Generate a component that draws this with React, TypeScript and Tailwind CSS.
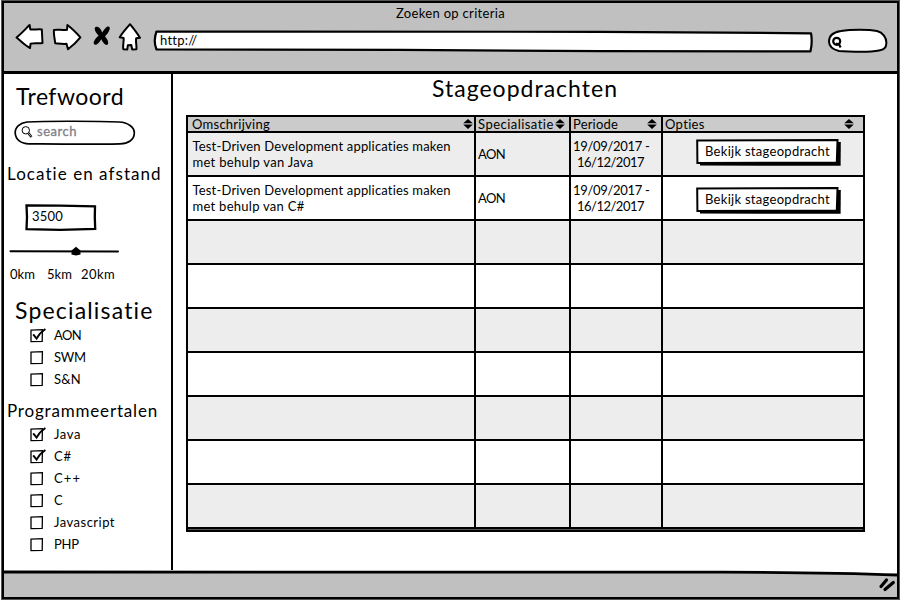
import { useLayoutEffect, useRef, useState, type ReactNode } from "react";

/* Single line of text whose tracking is fitted to the given width. */
function Label({ w, className = "", children }: { w: number; className?: string; children: string }) {
  const ref = useRef<HTMLSpanElement>(null);
  const [spacing, setSpacing] = useState(0);
  useLayoutEffect(() => {
    const el = ref.current;
    if (el) setSpacing((w - el.getBoundingClientRect().width) / children.length);
  }, []);
  return (
    <span ref={ref} style={{ letterSpacing: spacing }} className={`inline-block shrink-0 whitespace-pre ${className}`}>
      {children}
    </span>
  );
}

function Heading({ children, className = "" }: { children: ReactNode; className?: string }) {
  return <h2 className={`flex items-center font-normal ${className}`}>{children}</h2>;
}

function Check({ label, w, checked = false }: { label: string; w: number; checked?: boolean }) {
  return (
    <label className="flex h-[22px] items-center pl-[25px]">
      <svg width="20" height="18" viewBox="0 0 20 18" fill="none" stroke="#000" className="mr-[5px] shrink-0">
        <path d="M2 4.2 13.4 3.6 13.2 15.3 2 15.6Z" strokeWidth="1.3" />
        {checked && <path d="M4.2 8.3 7.6 12.6C9.8 8.6 12.3 5.6 16.4 3" strokeWidth="1.9" />}
      </svg>
      <Label w={w}>{label}</Label>
    </label>
  );
}

function SortIcon({ className = "" }: { className?: string }) {
  return (
    <svg width="10" height="10" viewBox="0 0 10 10" className={`mb-[1px] shrink-0 ${className}`}>
      <path d="M5 0 9.8 4.3H.2ZM.2 5.5H9.8L5 9.9Z" />
    </svg>
  );
}

function Button() {
  return (
    <button className="relative flex h-[27px] w-[146px] items-center pb-[2px] pl-[9px]">
      <svg width="146" height="27" viewBox="0 0 146 27" className="absolute inset-0">
        <path d="M4 3.2 144.800 3 144.600 26.800 4 26.500Z" />
        <path d="M1.2 1.4 141.500 1 140.800 23.600 1.400 24Z" fill="#fff" stroke="#000" strokeWidth="2" />
      </svg>
      <Label w={125} className="relative">Bekijk stageopdracht</Label>
    </button>
  );
}

const GRID = "grid grid-cols-[288px_95px_92px_200px]";
const CELL = "border-r-2 border-black";

const OPDRACHTEN = [
  { tail: "met behulp van Java", w: 121, pad: "pt-[6px]" },
  { tail: "met behulp van C#", w: 112, pad: "pt-[10px]" },
];

function Row({ index }: { index: number }) {
  const item = OPDRACHTEN[index];
  return (
    <div className={`${GRID} h-[44px] border-b-2 border-black ${index % 2 === 0 ? "bg-[#ededed]" : "bg-white"}`}>
      <div className={`${CELL} flex flex-col items-start pt-[5px] pl-[4.5px] leading-[16px]`}>
        {item && (
          <>
            <Label w={258.5}>Test-Driven Development applicaties maken</Label>
            <Label w={item.w}>{item.tail}</Label>
          </>
        )}
      </div>
      <div className={`${CELL} flex items-center pl-[2px]`}>{item && <Label w={27}>AON</Label>}</div>
      <div className={`${CELL} flex flex-col items-start pt-[5px] pl-[2px] leading-[16px]`}>
        {item && (
          <>
            <Label w={76.5}>19/09/2017 -</Label>
            <Label w={67} className="ml-[4px]">16/12/2017</Label>
          </>
        )}
      </div>
      <div className={`pl-[33px] ${item ? item.pad : ""}`}>{item && <Button />}</div>
    </div>
  );
}

function Toolbar() {
  return (
    <div className="flex h-[30px]">
      <svg width="30" height="30" viewBox="14 23 30 30" fill="#fff" stroke="#000" strokeWidth="2" strokeLinejoin="round" className="ml-[10px] shrink-0">
        <path d="M16.5 37.5C21 34 25 29.5 29.6 25L30.3 29.4C34 30 38 28.8 41.8 29.4L42.5 43C38.5 43.6 34.5 42.6 30.6 43.6L30 48C25 45.6 21 41 16.5 37.5Z" />
      </svg>
      <svg width="30" height="30" viewBox="52 23 30 30" fill="#fff" stroke="#000" strokeWidth="2" strokeLinejoin="round" className="ml-[8px] shrink-0">
        <path d="M54 30C58 28.8 62 30.8 67 29.8L67.4 25C72 28.5 76.5 33 80.4 37.3C77 41.5 72.5 45.8 68 49.3L66.5 43.8C62.5 44.2 58.5 43.5 55.2 43.2C54.8 39 53.4 34 54 30Z" />
      </svg>
      <svg width="20" height="30" viewBox="92 23 20 30" className="ml-[10px] shrink-0">
        <path d="M94.800 28C95.500 26 98.500 26.800 100 28.500C101 29.800 101.800 31.500 102.300 32.500C103.300 30.800 105 28 107 26.800C109 26 110.300 27 109.600 29.500C108.800 32 107 34.500 105 36.300C106.300 38 108.300 40.500 108.200 43C108 45.600 105.500 45.300 104 43.500C103 42.200 102 40.500 101.200 39.200C100.200 41 98.500 43.500 96.600 44.500C94.500 45.200 93.300 44 93.800 42C94.500 39.600 96.500 37.300 98.600 35.700C96.800 33.500 94.300 30.500 94.800 28Z" />
      </svg>
      <svg width="25" height="30" viewBox="117 23 25 30" fill="#fff" stroke="#000" strokeWidth="2" strokeLinejoin="round" className="ml-[5px] shrink-0">
        <path d="M130 24.2C126.500 28.500 122.500 32.500 119.800 37.300L123.600 38C124 42 122.600 45 123.300 49.200L127.300 49.500L127.800 45.300L131.300 45L132.200 49.500L136.400 49.200C136.800 45.500 135.500 42 136.200 38.300L140 37.800C137 33 133.500 28.500 130 24.200Z" />
      </svg>
      <div className="relative ml-[10px] flex h-[34px] w-[662px] items-center pl-[8px]">
        <svg width="662" height="34" viewBox="152 23 662 34" fill="#fff" stroke="#000" strokeWidth="2.2" strokeLinejoin="round" className="absolute inset-0">
          <path d="M156.500 31.500 600 31.800 811 33.300Q812.600 42 810.500 51.300L600 51.200 400 49.800 156.500 49.500Q153 41 156.500 31.500Z" />
        </svg>
        <Label w={37} className="relative">http://</Label>
      </div>
      <svg width="63" height="30" viewBox="826 23 63 30" fill="#fff" stroke="#000" strokeWidth="2" className="ml-[12px] shrink-0">
        <path d="M839 51C833 49.500 829 46 829 41.500C829 35.500 834 32 841 31C851 29.300 868 29.200 877 31C883 32.500 886.500 38 886.400 43C886.200 48 884 49.500 879 50.500C866 53 852 51.300 839 51Z" />
        <circle cx="836.700" cy="41.300" r="3.500" strokeWidth="2.200" />
        <path d="M836 43.600 839.200 44.600 840.600 47.400" fill="none" strokeWidth="2.200" />
      </svg>
    </div>
  );
}

function Sidebar() {
  return (
    <aside className="flex w-[169px] shrink-0 flex-col border-r-2 border-black pt-[8px]">
      <Heading className="h-[29px] pl-[12px] text-[23px]"><Label w={108}>Trefwoord</Label></Heading>
      <div className="relative mt-[9px] ml-[10px] flex h-[25px] w-[122px] items-center pb-[3px]">
        <svg width="122" height="26" viewBox="0 0 122 26" fill="#fff" stroke="#000" className="absolute inset-0">
          <path d="M13 2C35 .8 85 1.200 105 2C114 2.500 120.500 7 120.300 13C120.200 20 114 23.600 106 23.800C75 24.500 40 24 15 23.800C7 23.700 1.500 19.500 1.200 13C1 7 6 3 13 2Z" strokeWidth="1.700" />
          <circle cx="11.800" cy="10.300" r="3.700" strokeWidth="1" />
          <path d="M14.500 13.200 17.500 17" strokeWidth="2.300" />
          <path d="M14.700 13.400 17.200 16.500" stroke="#fff" strokeWidth=".7" />
        </svg>
        <Label w={40} className="relative ml-[23px] text-[#808088] [-webkit-text-stroke:0.3px_#808088]">search</Label>
      </div>
      <Heading className="mt-[18px] h-[20px] pl-[3px] text-[17px]"><Label w={155}>Locatie en afstand</Label></Heading>
      <div className="relative mt-[20px] ml-[20px] flex h-[28px] w-[73px] items-center pb-[2px] pl-[8px]">
        <svg width="73" height="28" viewBox="0 0 73 28" fill="none" stroke="#000" strokeWidth="2.300" className="absolute inset-0">
          <path d="M2.500 2.300 36 2.600 71 3.300 70.800 14 71.200 26 36 26.800 2.500 26.200 3 14Z" />
        </svg>
        <Label w={31}>3500</Label>
      </div>
      <svg width="112" height="12" viewBox="0 0 112 12" className="mt-[15px] ml-[5px]">
        <path d="M1.500 5.200 109 5.400" stroke="#000" strokeWidth="2" strokeLinecap="round" />
        <path d="M67 .8 71.500 4.500V8.500L67 9.500 62.500 8.500V4.500Z" />
      </svg>
      <div className="mt-[6px] flex h-[20px] items-center pl-[6px]">
        <Label w={25}>0km</Label>
        <Label w={25} className="ml-[12px]">5km</Label>
        <Label w={34} className="ml-[9px]">20km</Label>
      </div>
      <Heading className="mt-[12px] h-[28px] pl-[11px] text-[23px]"><Label w={139}>Specialisatie</Label></Heading>
      <Check label="AON" w={27} checked />
      <Check label="SWM" w={32} />
      <Check label="S&N" w={27} />
      <Heading className="mt-[10px] h-[21px] pl-[3px] text-[17px]"><Label w={151}>Programmeertalen</Label></Heading>
      <div className="mt-[2px]">
        <Check label="Java" w={27} checked />
        <Check label="C#" w={18} checked />
        <Check label="C++" w={27} />
        <Check label="C" w={9} />
        <Check label="Javascript" w={61} />
        <Check label="PHP" w={25} />
      </div>
    </aside>
  );
}

export default function App() {
  return (
    <div className="h-[600px] w-[900px] overflow-hidden bg-white pt-[1px] pl-[2px] font-['Lato',sans-serif] text-[13px] leading-none text-black">
      <div className="flex h-[598px] w-[897px] flex-col border-2 border-black shadow-[0_0_0_1px_#555]">
        <header className="h-[71px] border-b-[3px] border-black bg-[#c0c0c0]">
          <div className="flex h-[20px] items-center pl-[392px]"><Label w={109}>Zoeken op criteria</Label></div>
          <Toolbar />
        </header>
        <div className="flex min-h-0 flex-1">
          <Sidebar />
          <main className="flex-1 pl-[13px]">
            <h1 className="flex h-[41px] items-center pb-[12px] pl-[246px] text-[23px] font-normal"><Label w={186}>Stageopdrachten</Label></h1>
            <div className="w-[679px] border-2 border-black bg-[#555] pb-[1px]">
              <div className={`${GRID} h-[16px] border-b-2 border-black bg-[#cbcbcb] [&>div]:flex [&>div]:items-center`}>
                <div className={`${CELL} pl-[4px]`}><Label w={78}>Omschrijving</Label><SortIcon className="mr-[1px] ml-auto" /></div>
                <div className={`${CELL} pl-[2px]`}><Label w={76}>Specialisatie</Label><SortIcon className="mr-[4px] ml-auto" /></div>
                <div className={`${CELL} pl-[2px]`}><Label w={45}>Periode</Label><SortIcon className="mr-[4px] ml-auto" /></div>
                <div className="pl-[2px]"><Label w={40}>Opties</Label><SortIcon className="mr-[9px] ml-auto" /></div>
              </div>
              {Array.from({ length: 9 }, (_, i) => <Row key={i} index={i} />)}
            </div>
          </main>
        </div>
        <footer className="relative flex h-[27px] items-center justify-end">
          <svg width="893" height="27" viewBox="0 0 893 27" className="absolute inset-0">
            <path d="M0 2 720 2Q830 2.500 893 4.800V27H0Z" fill="#c0c0c0" />
            <path d="M0 2 720 2.100Q830 2.600 893 5" fill="none" stroke="#000" strokeWidth="2.800" />
          </svg>
          <svg width="20" height="18" viewBox="0 0 20 18" stroke="#000" strokeWidth="3.200" strokeLinecap="round" className="relative">
            <path d="M4 11.500 9.500 5M8 14.500 16.300 7.500" />
          </svg>
        </footer>
      </div>
    </div>
  );
}
